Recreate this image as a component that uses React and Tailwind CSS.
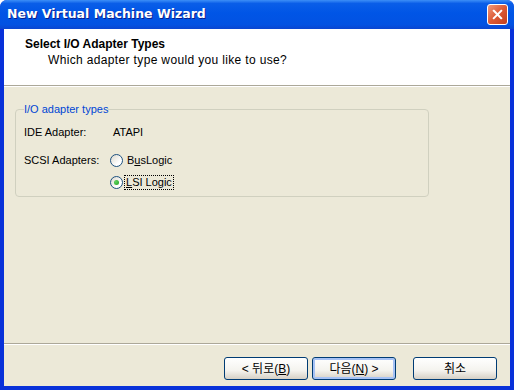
const ui = { fontFamily: '"Liberation Sans", "Noto Sans CJK KR", sans-serif' }

function Radio({ checked }) {
  return (
    <span className="relative grid place-items-center w-[13px] h-[13px] rounded-full border border-[#1c5180] bg-[linear-gradient(135deg,#dcd9cd,#ffffff_70%)]">
      {checked && <span className="w-[5px] h-[5px] rounded-full bg-[radial-gradient(circle_at_35%_35%,#5fd35f,#21a121)]" />}
    </span>
  )
}

function Button({ children, primary }) {
  return (
    <button
      className={
        'w-[84px] h-[23px] rounded-[3px] border border-[#003c74] text-[12px] text-black bg-[linear-gradient(#ffffff,#f4f3ee_60%,#d6d0c5)] flex items-center justify-center ' +
        (primary ? 'shadow-[inset_0_0_0_2px_#a6c2f5]' : '')
      }
      style={ui}
    >
      {children}
    </button>
  )
}

export default function App() {
  return (
    <div className="w-[514px] h-[390px] flex flex-col bg-[#0831d9] rounded-t-[7px] overflow-hidden" style={ui}>
      {/* title bar */}
      <div className="h-[29px] shrink-0 flex items-center justify-between pl-[7px] pr-[6px] bg-[linear-gradient(#3d8ff7_0%,#0a5ee8_12%,#0055e6_45%,#0252e2_85%,#0a45d0_100%)]">
        <span
          className="text-white font-bold text-[12.5px] [text-shadow:1px_1px_0_#0a1e8c]"
          style={{ fontFamily: '"DejaVu Sans", sans-serif' }}
        >
          New Virtual Machine Wizard
        </span>
        <span className="w-[21px] h-[21px] rounded-[3px] border border-white grid place-items-center bg-[linear-gradient(135deg,#f19a7c,#dc5a36_50%,#c2401e)]">
          <svg viewBox="0 0 12 12" className="w-[11px] h-[11px]">
            <path d="M2 2L10 10M10 2L2 10" stroke="#fff" strokeWidth="2.2" strokeLinecap="square" />
          </svg>
        </span>
      </div>

      {/* body */}
      <div className="flex-1 mx-[4px] mb-[4px] bg-[#ece9d8] flex flex-col">
        <div className="h-[57px] shrink-0 bg-white pl-[21px] pt-[8px] border-b border-[#aca899]">
          <div className="font-bold text-[12px] leading-[14px] text-black">Select I/O Adapter Types</div>
          <div className="text-[12px] leading-[14px] tracking-[0.35px] text-black pl-[23px] mt-[2px]">
            Which adapter type would you like to use?
          </div>
        </div>
        <div className="h-px bg-white" />

        <div className="flex-1 pt-[16px] pl-[11px]">
          <fieldset className="w-[414px] h-[94px] border border-[#d0d0bf] rounded-[4px] pl-[8px]">
            <legend className="text-[11px] text-[#0046d5] leading-[13px]">I/O adapter types</legend>
            <div className="flex flex-col text-[11px] text-black mt-[9px]">
              <div className="flex items-center h-[14px]">
                <span className="w-[89px]">IDE Adapter:</span>
                <span>ATAPI</span>
              </div>
              <div className="flex items-start mt-[14px]">
                <span className="w-[86px] leading-[14px]">SCSI Adapters:</span>
                <div className="flex flex-col gap-[8px]">
                  <div className="flex items-center gap-[3px] h-[14px]">
                    <Radio />
                    <span className="px-[1px]">
                      B<u>u</u>sLogic
                    </span>
                  </div>
                  <div className="flex items-center gap-[2px] h-[14px]">
                    <Radio checked />
                    <span className="px-[1px] outline outline-1 outline-dotted outline-black leading-[13px]">
                      <u>L</u>SI Logic
                    </span>
                  </div>
                </div>
              </div>
            </div>
          </fieldset>
        </div>

        <div className="h-px bg-[#aca899]" />
        <div className="h-px bg-white" />
        <div className="h-[41px] shrink-0 flex items-start pt-[12px] pl-[220px]">
          <Button>
            &lt; 뒤로(<u>B</u>)
          </Button>
          <span className="w-[4px]" />
          <Button primary>
            다음(<u>N</u>) &gt;
          </Button>
          <span className="w-[17px]" />
          <Button>취소</Button>
        </div>
      </div>
    </div>
  )
}
